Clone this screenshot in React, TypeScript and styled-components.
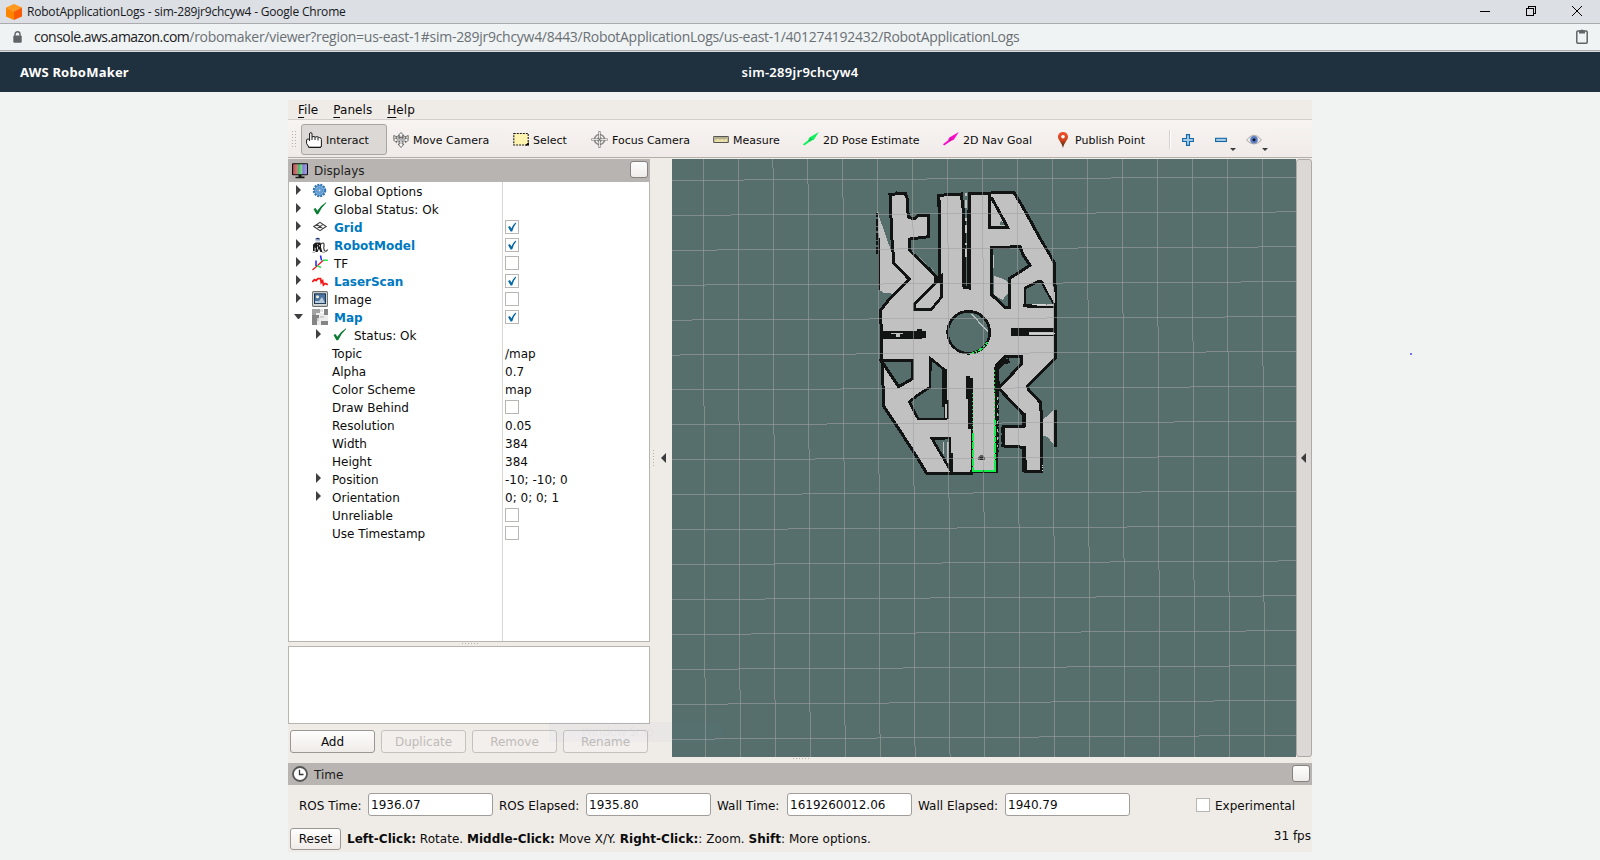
import React from 'react';
import styled, { createGlobalStyle } from 'styled-components';

const Global = createGlobalStyle`
  *, *::before, *::after { box-sizing: border-box; }
  html, body { margin: 0; padding: 0; }
  body {
    width: 1600px; height: 860px; overflow: hidden;
    background: #f1f3f3; color: #0c0c0c;
    font-family: "DejaVu Sans", sans-serif; font-size: 12px;
  }
`;

const Page = styled.div`
  position: relative; width: 1600px; height: 860px;
  display: flex; flex-direction: column; align-items: center;
`;

/* ---------- browser chrome ---------- */
const TitleBar = styled.div`
  width: 100%; height: 24px; flex: none; display: flex; align-items: center;
  background: #dcdfe4; border-bottom: 1px solid #a9abad; padding-left: 6px;
  font-family: "Open Sans", sans-serif; color: #16181b;
`;
const TitleText = styled.span`
  flex: 1; margin-left: 5px; font-size: 12px; line-height: 22px; letter-spacing: -0.2px; white-space: nowrap;
`;
const WindowButtons = styled.div`
  display: flex; width: 138px; height: 22px; align-items: center;
  svg { margin: 0 18px 2px 18px; flex: none; }
`;
const AddressBar = styled.div`
  width: 100%; height: 28px; flex: none; display: flex; align-items: center;
  background: #eff3f4; border-bottom: 1px solid #d5dadd; box-shadow: inset 0 -1px 0 #a9abad;
  padding: 0 12px 2px 13px;
`;
const Url = styled.div`
  flex: 1; margin-left: 12px; font-family: "Open Sans", sans-serif; font-size: 14px; line-height: 24px;
  letter-spacing: -0.285px; color: #6b7074; white-space: nowrap;
  b { font-weight: 400; letter-spacing: -0.52px; color: #1d2124; }
`;
const AwsHeader = styled.header`
  width: 100%; height: 40px; flex: none; display: grid; grid-template-columns: 1fr 1fr 1fr; align-items: center;
  background: #1f303e; color: #fff; padding: 0 20px; margin-bottom: 8px;
  font: 700 13px/40px "Noto Sans", sans-serif; letter-spacing: 0.2px; white-space: nowrap;
`;
const SimName = styled.span`
  text-align: center; font-weight: 600; letter-spacing: 0.28px;
`;

/* ---------- application window ---------- */
const Rviz = styled.div`
  width: 1024px; height: 752px; flex: none; background: #efebe7; display: flex; flex-direction: column;
`;
const MenuBar = styled.div`
  height: 20px; flex: none; display: flex; gap: 15px; padding-left: 10px; border-bottom: 1px solid #d3cfcc;
  line-height: 20px;
`;
const MenuItem = styled.span`
  display: block; letter-spacing: 0.05px;
  &::first-letter { text-decoration: underline; text-underline-offset: 3px; }
`;
const ToolBar = styled.div`
  height: 38px; flex: none; display: flex; align-items: center; padding: 2px 0 0 4px; margin-bottom: 1px;
  background: linear-gradient(#f8f4f1, #f0ebe8); border-bottom: 1px solid #b3aeaa; font-size: 11px;
`;
const Grip = styled.div<{ $w: number; $h: number; $after?: number }>`
  width: ${p => p.$w}px; height: ${p => p.$h}px; flex: none; margin-right: ${p => p.$after ?? 0}px;
  background-image: radial-gradient(circle at 0.5px 0.5px, #b5b1ae 0.6px, transparent 0.8px);
  background-size: 3px 3px;
`;
const Tool = styled.div<{ $w: number; $active?: boolean }>`
  width: ${p => p.$w}px; height: 31px; flex: none; display: flex; align-items: center; gap: 4px; padding-left: 4px;
  white-space: nowrap; border: 1px solid ${p => (p.$active ? '#a9a5a2' : 'transparent')};
  border-radius: 3px; background: ${p => (p.$active ? '#dcd8d5' : 'transparent')};
  margin-right: ${p => (p.$active ? 1 : 0)}px;
  svg { flex: none; }
  span { padding-top: 1px; }
`;
const ToolSeparator = styled.div`
  width: 1px; height: 19px; background: #d5d1ce; box-shadow: 1px 0 0 #fff; margin-right: 11px;
`;
const IconTool = styled.div`
  position: relative; width: 33px; height: 31px; display: flex; align-items: center; padding-left: 1px;
  &:last-child { padding-left: 0; margin-left: -1px; }
`;
const DropArrow = styled.i`
  position: absolute; left: 16px; top: 24px;
  border: 3px solid transparent; border-top-color: #3c3c3c; border-bottom: 0;
`;

const Middle = styled.div`
  height: 598px; flex: none; display: flex;
`;
const DisplaysDock = styled.section`
  width: 362px; flex: none; display: flex; flex-direction: column;
`;
const DockHeader = styled.div<{ $h: number }>`
  height: ${p => p.$h}px; flex: none; display: flex; align-items: center; padding: 0 2px 0 4px; background: #b8b4b1;
  span { flex: 1; margin-left: 6px; padding-top: 1px; color: #1c1c1c; }
`;
const FloatButton = styled.div`
  width: 18px; height: 17px; margin-bottom: 2px; border: 1px solid #858280; border-radius: 3px;
  background: linear-gradient(#fdfdfd, #efecea);
`;
const Tree = styled.div`
  height: 460px; flex: none; border: 1px solid #b8b4b0; border-top: 0;
  background: linear-gradient(90deg, #fff 213px, #d8d5d3 213px, #d8d5d3 214px, #fff 214px);
`;
const TreeRow = styled.div`
  display: grid; grid-template-columns: 216px 1fr; height: 18px; align-items: center; line-height: 16px;
`;
const NameCell = styled.div<{ $depth: number }>`
  display: flex; align-items: center; white-space: nowrap; padding-left: ${p => 7 + p.$depth * 20}px;
  > svg { flex: none; margin-right: 4px; }
`;
const Expander = styled.i<{ $state?: 'open' | 'closed' }>`
  width: ${p => (p.$state === 'open' ? 9 : 5)}px; flex: none;
  margin: 0 ${p => (p.$state === 'open' ? 9 : 11)}px 2px ${p => (p.$state === 'open' ? -2 : 0)}px;
  ${p => (p.$state === 'closed' ? 'border: 5px solid transparent; border-left-color: #404040; border-right: 0;' : '')}
  ${p => (p.$state === 'open' ? 'border: 4.5px solid transparent; border-top: 5px solid #404040; border-bottom: 0;' : '')}
`;
const Label = styled.span<{ $on?: boolean; $gap: number }>`
  display: block; margin-left: ${p => p.$gap}px; padding-top: 2px;
  ${p => (p.$on ? 'font-weight: 700; color: #0079c1;' : '')}
`;
const CheckBox = styled.div`
  width: 14px; height: 14px; border: 1px solid #b9b5b2; background: #fff; flex: none;
  svg { display: block; margin: -1px; }
`;
const SplitGrip = styled.div<{ $left: number; $h: number }>`
  height: ${p => p.$h}px; padding: 1px 0 0 ${p => p.$left}px; flex: none;
`;
const Description = styled.div`
  height: 78px; flex: none; border: 1px solid #b8b4b0; background: #fff;
`;
const ButtonRow = styled.div`
  display: flex; gap: 6px; padding: 6px 2px 0;
`;
const PushButton = styled.button<{ $w: number; $h: number }>`
  width: ${p => p.$w}px; height: ${p => p.$h}px; padding: 0; flex: none; border: 1px solid #9b9793; border-radius: 3px;
  background: linear-gradient(#fefefe, #efebe8); font: 12px "DejaVu Sans", sans-serif; color: #0c0c0c;
  &:disabled { color: #bfbbb8; border-color: #c5c1be; background: #f3efec; }
`;
const Splitter = styled.div`
  width: 22px; flex: none; display: flex; align-items: center; gap: 6px; padding-left: 3px;
`;
const LeftArrow = styled.i`
  border: 5px solid transparent; border-right-color: #3c3c3c; border-left: 0; margin-top: -1px;
`;
const Viewport = styled.div`
  width: 624px; height: 598px; flex: none; background: #566f6c;
  svg { display: block; }
`;
const RightHandle = styled.div`
  width: 16px; flex: none; display: flex; align-items: center; padding-left: 4px;
  border: 1px solid #aeaaa7; border-radius: 3px; background: #dcd8d6;
`;

const FieldRow = styled.div`
  height: 41px; flex: none; display: flex; align-items: center; padding: 0 0 2px 11px; white-space: nowrap;
`;
const FieldLabel = styled.label<{ $w: number }>`
  width: ${p => p.$w}px; flex: none; padding-top: 3px;
`;
const Field = styled.div`
  width: 125px; height: 23px; flex: none; margin-right: 6px; padding-left: 2px; line-height: 22px;
  border: 1px solid #a19d9a; border-radius: 3px; background: #fff;
`;
const Experimental = styled.div`
  display: flex; align-items: center; gap: 5px; margin-left: 60px;
  span { padding-top: 3px; }
`;
const StatusRow = styled.div`
  display: flex; align-items: center; padding: 2px 1px 0 2px; height: 24px; white-space: nowrap;
  p { flex: 1; margin: 0 0 0 6px; letter-spacing: 0.03px; }
`;
const Fps = styled.span`
  margin-top: -6px;
`;
const SnipGhost = styled.div`
  position: absolute; left: 549px; top: 722px; width: 173px; height: 20px; padding-left: 32px;
  background: rgba(110, 150, 220, 0.04); color: rgba(90, 90, 90, 0.06); line-height: 20px;
  font-family: "Open Sans", sans-serif;
`;
const PenDot = styled.div`
  position: absolute; left: 1410px; top: 353px; width: 2px; height: 2px; border-radius: 1px; background: #4646f0;
`;

/* ---------- icons ---------- */
const Svg = ({ children, w = 16, h = 16, ...rest }: any) => (
  <svg width={w} height={h} viewBox={`0 0 ${w} ${h}`} fill="none" {...rest}>{children}</svg>
);
const Cube = () => (
  <Svg>
    <path d="M8 0 L16 3.5 L8 7.5 L0 3.5Z" fill="#ff9a1f" />
    <path d="M0 3.5 L8 7.5 V16 L0 12.5Z" fill="#ff8400" />
    <path d="M16 3.5 L8 7.5 V16 L16 12.5Z" fill="#f95a05" />
  </Svg>
);
const Lock = () => (
  <Svg w={9} h={12}>
    <path d="M2 5 V3.3 A2.5 2.5 0 0 1 7 3.3 V5" stroke="#606467" strokeWidth="1.4" />
    <rect x="0.3" y="4.5" width="8.4" height="7.3" rx="1" fill="#606467" />
  </Svg>
);
const Clipboard = () => (
  <Svg w={12} h={15}>
    <rect x="0.8" y="2" width="10.4" height="12.2" rx="1" stroke="#606467" strokeWidth="1.5" />
    <path d="M3 1.5 H4.6 A1.5 1.5 0 0 1 7.4 1.5 H9 V4.5 H3Z" fill="#606467" />
  </Svg>
);
const Hand = () => (
  <Svg>
    <path d="M3.6 9 V2 Q3.6 .6 4.8 .6 T6 2 V5 Q7 4.2 8.2 4.6 T9.8 5 Q11 4.4 12 5 T13.5 5.6 Q15.4 5.6 15.4 7.5 V14 Q15.4 15.4 14 15.4 H3.6 Q2.4 15.4 2.2 14 L.6 11.5 V8 Q.8 6.8 2.2 7 L3.6 8" fill="#fff" stroke="#161616" strokeWidth="1" />
    <path d="M6 5 V8 M9 5 V8 M12 5.5 V8.4 M2.5 15.3 H15" stroke="#161616" strokeWidth="1" />
  </Svg>
);
const Move = () => (
  <Svg>
    <g stroke="#4c4c4c" strokeWidth=".8" fill="#f5f5f5">
      <path d="M8 .5 L11 3.7 H9.2 V7 H12.5 V5.3 L15.6 8 L12.5 10.6 V9 H9.2 V12 H11 L8 15.5 L5 12 H6.8 V9 H3.5 V10.6 L.4 8 L3.5 5.3 V7 H6.8 V3.7 H5Z" />
      <path d="M.8 3.5 L3 4.5 L8 5.5 L13 4.5 L15.2 3.5 V7 M.8 3.5 V7" fill="none" />
    </g>
    <path d="M5 4.7 L11 10.6 M11 4.7 L5 10.6" stroke="#777" strokeWidth=".7" />
  </Svg>
);
const Select = () => (
  <Svg>
    <rect x=".8" y="1.5" width="14.4" height="11.5" fill="#fff3b0" stroke="#1d1d1d" strokeWidth="1.1" strokeDasharray="2 1" />
    <path d="M15.8 10 V13.6 H12Z" fill="#000" />
  </Svg>
);
const Focus = () => (
  <Svg w={17} h={17}>
    <circle cx="8.5" cy="8.5" r="5" stroke="#8a8a8a" strokeWidth="1.6" />
    <circle cx="8.5" cy="8.5" r="2.2" stroke="#8a8a8a" strokeWidth="1" />
    <path d="M8.5 .3 V16.7 M.3 8.5 H16.7" stroke="#777" strokeWidth="2.2" />
    <path d="M8.5 1 V16 M1 8.5 H16" stroke="#f2f0ee" strokeWidth=".9" />
    <circle cx="8.5" cy="8.5" r="1" fill="#666" />
  </Svg>
);
const Ruler = () => (
  <Svg>
    <rect x=".7" y="4.5" width="14.6" height="6" rx=".5" fill="#e9dfa8" stroke="#555" strokeWidth="1.1" />
    <path d="M3 5 V7.5 M5 5 V7 M7 5 V7.5 M9 5 V7 M11 5 V7.5 M13 5 V7" stroke="#666" strokeWidth=".8" />
  </Svg>
);
const PoseArrow = ({ c }: { c: string }) => (
  <Svg>
    <path d="M0 12.3 L5.4 8 L6 5.8 L15.8 0 L10.8 7.8 L7.8 9 L1.2 13.6 Z" fill={c} />
    <path d="M5.4 8 L7.8 9 M7 6 L9 8" stroke="#333" strokeOpacity=".45" strokeWidth=".9" />
  </Svg>
);
const Pin = () => (
  <Svg>
    <defs><linearGradient id="pin" x1="0" y1="0" x2="0" y2="1"><stop offset="0" stopColor="#f4502c" /><stop offset=".5" stopColor="#d0421d" /><stop offset="1" stopColor="#2c2a10" /></linearGradient></defs>
    <path d="M8 0 C4.8 0 3 2.2 3 4.8 C3 8.2 6.8 10.5 8 16 C9.2 10.5 13 8.2 13 4.8 C13 2.2 11.2 0 8 0Z" fill="url(#pin)" />
    <circle cx="8" cy="4.8" r="1.8" fill="#fff" />
  </Svg>
);
const Plus = () => (
  <Svg w={12} h={12}><path d="M4.5 .6 H7.5 V4.5 H11.4 V7.5 H7.5 V11.4 H4.5 V7.5 H.6 V4.5 H4.5Z" fill="#a5cbe6" stroke="#1568a6" strokeWidth="1.1" /></Svg>
);
const Minus = () => (
  <Svg w={12} h={12}><rect x=".6" y="4.3" width="10.8" height="3.2" fill="#a5cbe6" stroke="#1568a6" strokeWidth="1.1" /></Svg>
);
const Eye = () => (
  <Svg w={16} h={12}>
    <path d="M.5 6 Q8 -3.5 15.5 6 Q8 14 .5 6Z" fill="#efedec" stroke="#a9a6a6" strokeWidth="1" />
    <circle cx="8" cy="5.8" r="3.8" fill="#5c7dc0" /><circle cx="8" cy="5.8" r="1.5" fill="#0d1330" />
  </Svg>
);
const Monitor = () => (
  <Svg>
    <defs><linearGradient id="rgb"><stop offset="0" stopColor="#b04a4f" /><stop offset=".33" stopColor="#d98080" /><stop offset=".34" stopColor="#3fae60" /><stop offset=".66" stopColor="#90d8a0" /><stop offset=".67" stopColor="#7d78d0" /><stop offset="1" stopColor="#a9a9f0" /></linearGradient></defs>
    <rect x=".5" y=".7" width="15" height="11" rx=".5" fill="url(#rgb)" stroke="#0c0c0c" strokeWidth="1.1" />
    <path d="M6.5 12 H9.5 V13.4 H12.5 V15.3 H3.5 V13.8 H6.5Z" fill="#151515" />
  </Svg>
);
const Gear = () => (
  <Svg>
    <circle cx="7.5" cy="7.5" r="5.7" stroke="#2f72b3" strokeWidth="2" strokeDasharray="2 1" />
    <circle cx="7.5" cy="7.5" r="4.9" fill="#7fb3de" stroke="#2f72b3" strokeWidth=".9" />
    <circle cx="7.5" cy="7.5" r="2.8" stroke="#2f72b3" strokeWidth=".9" strokeDasharray="1.5 .7" /><circle cx="7.5" cy="7.5" r="1.3" fill="#dcecf8" stroke="#2f72b3" strokeWidth=".6" />
  </Svg>
);
const Check = () => (
  <Svg><path d="M1.5 8 L3.6 7 L5.3 9.8 Q8.5 4.5 14 1.2 L14.2 1.9 Q9 6.5 6.2 13.2 L4.4 13.2Z" fill="#0c7c35" /></Svg>
);
const GridIcon = () => (
  <Svg><path d="M1.8 7.5 L8 3.4 L14.2 7.5 L8 11.6Z M4.9 5.4 L11 9.6 M11 5.4 L4.9 9.6" stroke="#3f3f3f" strokeWidth="1.1" /></Svg>
);
const Robot = () => (
  <Svg>
    <path d="M3.5 1.8 Q5.5 -.2 8 1.8 V2.6 H3.5Z" fill="#1c3575" /><path d="M3.5 3.3 H8 V4.3 H3.5Z" fill="#9aa6c4" />
    <path d="M3.6 5.4 H8.4 L9 7 V10.5 L10.4 15 H8.4 L7 11.8 L5.6 15 H3.4 L3.6 11 L2.6 10.5 L2.8 14 H1 V7.5 Z" fill="#1b1b1b" />
    <path d="M9 7 Q12.6 4.4 12 9 Q11.4 11.5 12.4 13.4 Q14 15.4 15.6 12.6" stroke="#333" strokeWidth="1.1" />
    <path d="M5 7.4 H5.8 M7.4 8 V9.5 M5.5 9.5 V12.4" stroke="#eee" strokeWidth=".9" />
    <path d="M.5 15.3 H3 M10 15.3 H13" stroke="#999" strokeWidth=".9" />
  </Svg>
);
const Tf = () => (
  <Svg>
    <path d="M.5 15 L5 11 L11 5.5" stroke="#f01a1a" strokeWidth="1.3" /><path d="M4 11 V5.5 M9.5 5.4 L8.5 .5" stroke="#2222e8" strokeWidth="1.5" />
    <path d="M5 10.7 L9 12.5 M11 5.3 H15.8" stroke="#1fe04a" strokeWidth="1.4" />
  </Svg>
);
const Laser = () => (
  <Svg><path d="M.3 9 L2.5 6.6 L4 7.6 L6 5.6 L8.6 5.6 L9.2 9.6 L10.6 7.8 L11.4 12 L13 10.4 L15.8 11.6" stroke="#f51414" strokeWidth="1.7" /></Svg>
);
const ImageIcon = () => (
  <Svg>
    <rect x=".6" y=".6" width="14.8" height="14.8" rx="1" fill="#e9ebe8" stroke="#6b6f6c" strokeWidth="1.1" />
    <rect x="2.5" y="2.8" width="11" height="9.8" fill="#4a74a2" stroke="#1f3650" />
    <path d="M3 10 L7 10 L10 6 L13 12 H3Z" fill="#b8cbd8" /><circle cx="5.5" cy="5.8" r="1.5" fill="#f6f3d6" />
  </Svg>
);
const MapIcon = () => (
  <Svg shapeRendering="crispEdges">
    <path d="M0 0 H8 V4 H4 V8 H0Z" fill="#a2a2a2" />
    <rect x="8" y="0" width="3" height="3" fill="#e4e4e4" /><rect x="4" y="4" width="12" height="12" fill="#ececec" />
    <path d="M12 0 H16 V6 H12Z M0 6 H5 V16 H0Z M9 12 H16 V16 H9Z M5 6 H7 V9 H5Z" fill="#858585" />
    <path d="M8 7 H12 V9 H8Z M5 9 H7 V12 H5Z" fill="#cfcfcf" />
  </Svg>
);
const Clock = () => (
  <Svg><circle cx="8" cy="8" r="7" fill="#fff" stroke="#555" strokeWidth="1.8" /><path d="M7.5 3.8 V8.5 H11.5" stroke="#333" strokeWidth="1.3" /></Svg>
);
const Tick = () => (
  <Svg w={14} h={14}><path d="M3 7 L5 6 L6.3 8.5 Q7.7 5 10.6 2.6 L11.2 3.2 Q8.5 6.5 7.2 11.4 L5.6 11.4Z" fill="#0868a8" /></Svg>
);

/* ---------- map view ---------- */
const BLACK = '#111413';
const FREE = '#c1c1c1';
const VOID = '#566f6c';
const GREEN = '#10f048';

const SlamMap = () => (
  <svg width="624" height="598" viewBox="0 0 624 598" shapeRendering="crispEdges">
    <rect width="624" height="598" fill={VOID} />
    <g transform="translate(198 21) scale(.333333)" stroke={BLACK} strokeWidth="9" fill={VOID}>
      <path d="M22 96 L38 140 L64 215 L72 250 L118 298 L74 342 L40 338 L28 330 V200Z" fill={FREE} stroke="none" />
      <path d="M22 100 V226" strokeWidth="5" strokeDasharray="12 5 22 3" /><path d="M28 175 V330" strokeWidth="6" />
      <path d="M512 725 L552 690 V795 L532 770 L514 768Z" fill={FREE} stroke="none" />
      <path d="M557 690 V800" strokeWidth="7" />
      <path d="M60 44 L72 44 L80 39 L106 40 L111 54 L112 90 L117 113 L134 116 L146 106 L176 106 V170 L120 177 V212 L150 242 L180 270 L208 300 L210 180 L206 46 L274 42 L282 110 L284 322 L298 324 V40 L432 38 L455 75 L480 120 L510 175 L540 225 L553 250 L555 320 L558 390 L556 534 L472 618 L476 630 L512 668 L516 760 V875 H466 L464 802 L402 798 V740 H462 V705 L386 625 L380 600 V875 H306 V880 H170 L140 830 L95 760 L42 680 L36 550 L32 390 L60 355 L95 320 L118 298 L72 250 L66 180Z" fill={FREE} strokeWidth="9" />
      <path d="M370 540 H470 L480 640 L400 640Z" fill={FREE} stroke="none" />
      <path d="M556 534 L472 618 L476 630 L512 668" fill="none" />
      <path d="M380 556 L405 531 H456 V550 L386 625Z" strokeWidth="9" />
      <path d="M386 625 L462 705" strokeWidth="9" />
      <path d="M384 562 L396 548 L418 542" strokeWidth="14" fill="none" />
      <path d="M288 40 V240" stroke={FREE} strokeWidth="5" strokeDasharray="8 12 24 30" />
      <path d="M281 110 V320 M297 90 V320" strokeWidth="10" />
      <path d="M125 212 L205 285" stroke="#b4bcba" strokeWidth="2" strokeDasharray="12 17 30 20" />
      <path d="M198 308 L134 372 L132 388 H184 L214 352 V290 L198 308" fill={FREE} strokeWidth="8" />
      <path d="M192 290 H216 V310 H192Z" fill={BLACK} stroke="none" />
      <path d="M210 60 V300" strokeWidth="8" />
      <path d="M360 44 V142 H412 L400 118 L364 52" fill={FREE} strokeWidth="9" />
      <path d="M396 122 L404 136 H390 V126Z" stroke="none" />
      <path d="M364 203 L450 200 L458 222 L480 256 L418 296 V382 H405 L366 345Z" strokeWidth="9" />
      <path d="M372 288 L396 295 L413 305 V340 L397 360 L372 344Z" fill={FREE} stroke="none" />
      <path d="M370 225 V265" stroke={FREE} strokeWidth="4" />
      <path d="M465 378 V324 L505 304 H514 L552 372" strokeWidth="8" />
      <path d="M520 310 L554 335 V368 L550 365Z" fill={FREE} stroke="none" />
      <path d="M465 326 V378 M460 376 H500 M470 381 H555" strokeWidth="8" />
      <path d="M486 374 H528" stroke="#d8d8d8" strokeWidth="4" />
      <path d="M424 443 H552 V456 H476 V467 H424Z" fill={BLACK} stroke="none" />
      <path d="M476 467 H556" strokeWidth="4" /><path d="M476 460 H554" stroke="#d4d4d4" strokeWidth="4" />
      <path d="M30 453 H142 V447 H156 V453 H168 V473 H156 V478 H34Z" fill={BLACK} stroke="none" />
      <path d="M64 461 H98 M78 465 H90 M78 470 H90" stroke={FREE} strokeWidth="4" />
      <circle cx="296" cy="457" r="63" strokeWidth="8" />
      <path d="M305 402 L354 456" stroke="#b8c0be" strokeWidth="4" />
      <path d="M34 542 H128 V596 L86 620Z" />
      <path d="M181 535 L206 555 L226 572 V717 H145 L136 700 L118 665 L148 642 L180 622Z" strokeWidth="8" />
      <path d="M224 568 V680" strokeWidth="13" />
      <path d="M228 672 V714" stroke={FREE} strokeWidth="7" /><path d="M234 660 V718" strokeWidth="4" />
      <path d="M186 776 L240 868 V774Z" strokeWidth="8" />
      <path d="M233 785 V850" stroke={FREE} strokeWidth="6" />
      <path d="M222 786 V822" stroke={FREE} strokeWidth="3" />
      <path d="M288 588 H300 V594 H308 V870 H302 V748 H294 V656 H288Z" fill={BLACK} stroke="none" />
      <path d="M246 820 V876" strokeWidth="5" /><path d="M232 882 H280" strokeWidth="9" strokeDasharray="4 3" />
      <path d="M380 560 V640" strokeWidth="13" />
      <path d="M383 640 V815" strokeWidth="7" strokeDasharray="12 5" /><path d="M383 652 V800" stroke={FREE} strokeWidth="4" strokeDasharray="8 16" />
      <path d="M398 740 V800" strokeWidth="10" strokeDasharray="20 6" />
      <path d="M462 700 V740 M462 805 V875" strokeWidth="11" />
      <path d="M519 855 V875" stroke="#ddd" strokeWidth="3" strokeDasharray="3 4" />
      <path d="M559 315 V470" strokeWidth="6" strokeDasharray="50 6 18 4" />
      <g stroke={GREEN} fill="none">
        <path d="M309 640 V760" strokeWidth="3" strokeDasharray="3 9" />
        <path d="M309 760 V874" strokeWidth="6" strokeDasharray="22 3" />
        <path d="M306 873 H380" strokeWidth="7" strokeDasharray="34 3" />
        <path d="M374 570 V720" strokeWidth="4" strokeDasharray="5 7" />
        <path d="M376 720 V876" strokeWidth="6" strokeDasharray="14 4 30 3" />
        <path d="M298 521 Q332 518 352 486" strokeWidth="5" strokeDasharray="14 5 6 4" />
      </g>
      <path d="M323 839 V833 L330 825 H339 L345 833 V839 H339 V834 H330 V839Z" fill="#606060" stroke="none" />
      <path d="M330 830 H339 V839 H330Z" fill="#2a2a2a" stroke="none" />
    </g>
    <g stroke="#a0a0a4" strokeOpacity=".58" strokeWidth="1">
      {Array.from({ length: 17 }, (_, k) => (
        <line key={`v${k}`} x1={31.1 + k * 34.94} y1="0" x2={33.3 + k * 34.96} y2="598" />
      ))}
      {Array.from({ length: 17 }, (_, k) => (
        <line key={`h${k}`} x1="0" y1={21.4 + k * 34.93} x2="624" y2={18 + k * 34.9} />
      ))}
    </g>
  </svg>
);

/* ---------- data ---------- */
type Row = {
  name: string; depth?: number; arrow?: 'open' | 'closed'; icon?: React.ReactNode; on?: boolean;
  check?: boolean; value?: string;
};
const rows: Row[] = [
  { name: 'Global Options', arrow: 'closed', icon: <Gear /> },
  { name: 'Global Status: Ok', arrow: 'closed', icon: <Check /> },
  { name: 'Grid', arrow: 'closed', icon: <GridIcon />, on: true, check: true },
  { name: 'RobotModel', arrow: 'closed', icon: <Robot />, on: true, check: true },
  { name: 'TF', arrow: 'closed', icon: <Tf />, check: false },
  { name: 'LaserScan', arrow: 'closed', icon: <Laser />, on: true, check: true },
  { name: 'Image', arrow: 'closed', icon: <ImageIcon />, check: false },
  { name: 'Map', arrow: 'open', icon: <MapIcon />, on: true, check: true },
  { name: 'Status: Ok', depth: 1, arrow: 'closed', icon: <Check /> },
  { name: 'Topic', depth: 1, value: '/map' },
  { name: 'Alpha', depth: 1, value: '0.7' },
  { name: 'Color Scheme', depth: 1, value: 'map' },
  { name: 'Draw Behind', depth: 1, check: false },
  { name: 'Resolution', depth: 1, value: '0.05' },
  { name: 'Width', depth: 1, value: '384' },
  { name: 'Height', depth: 1, value: '384' },
  { name: 'Position', depth: 1, arrow: 'closed', value: '-10; -10; 0' },
  { name: 'Orientation', depth: 1, arrow: 'closed', value: '0; 0; 0; 1' },
  { name: 'Unreliable', depth: 1, check: false },
  { name: 'Use Timestamp', depth: 1, check: false },
];
const tools: { name: string; w: number; icon: React.ReactNode }[] = [
  { name: 'Interact', w: 86, icon: <Hand /> },
  { name: 'Move Camera', w: 120, icon: <Move /> },
  { name: 'Select', w: 78, icon: <Select /> },
  { name: 'Focus Camera', w: 122, icon: <Focus /> },
  { name: 'Measure', w: 90, icon: <Ruler /> },
  { name: '2D Pose Estimate', w: 140, icon: <PoseArrow c="#0cf25c" /> },
  { name: '2D Nav Goal', w: 112, icon: <PoseArrow c="#fb0cc8" /> },
  { name: 'Publish Point', w: 119, icon: <Pin /> },
];
const fields: [string, number, string][] = [
  ['ROS Time:', 69, '1936.07'],
  ['ROS Elapsed:', 87, '1935.80'],
  ['Wall Time:', 70, '1619260012.06'],
  ['Wall Elapsed:', 87, '1940.79'],
];

export default function App() {
  return (
    <Page>
      <Global />
      <TitleBar>
        <Cube />
        <TitleText>RobotApplicationLogs - sim-289jr9chcyw4 - Google Chrome</TitleText>
        <WindowButtons>
          <Svg w={10} h={10} shapeRendering="crispEdges"><path d="M0 5.5 H10" stroke="#000" /></Svg>
          <Svg w={10} h={10} shapeRendering="crispEdges"><path d="M.5 2.5 H7.5 V9.5 H.5Z M2.5 2.5 V.5 H9.5 V7.5 H7.5" stroke="#000" /></Svg>
          <Svg w={10} h={10}><path d="M0 0 L10 10 M10 0 L0 10" stroke="#000" /></Svg>
        </WindowButtons>
      </TitleBar>
      <AddressBar>
        <Lock />
        <Url><b>console.aws.amazon.com</b>/robomaker/viewer?region=us-east-1#sim-289jr9chcyw4/8443/RobotApplicationLogs/us-east-1/401274192432/RobotApplicationLogs</Url>
        <Clipboard />
      </AddressBar>
      <AwsHeader>
        <span>AWS RoboMaker</span>
        <SimName>sim-289jr9chcyw4</SimName>
      </AwsHeader>

      <Rviz>
        <MenuBar>
          <MenuItem>File</MenuItem>
          <MenuItem>Panels</MenuItem>
          <MenuItem>Help</MenuItem>
        </MenuBar>
        <ToolBar>
          <Grip $w={6} $h={17} $after={3} />
          {tools.map((t, i) => (
            <Tool key={t.name} $w={t.w} $active={i === 0}>{t.icon}<span>{t.name}</span></Tool>
          ))}
          <ToolSeparator />
          <IconTool><Plus /></IconTool>
          <IconTool><Minus /><DropArrow /></IconTool>
          <IconTool><Eye /><DropArrow /></IconTool>
        </ToolBar>

        <Middle>
          <DisplaysDock>
            <DockHeader $h={23}><Monitor /><span>Displays</span><FloatButton /></DockHeader>
            <Tree>
              {rows.map(r => {
                const depth = r.depth ?? 0;
                return (
                  <TreeRow key={r.name}>
                    <NameCell $depth={depth}>
                      <Expander $state={r.arrow} />
                      {r.icon}
                      <Label $on={r.on} $gap={r.icon ? 2 : 0}>{r.name}</Label>
                    </NameCell>
                    {r.check !== undefined ? <CheckBox>{r.check && <Tick />}</CheckBox> : <Label $gap={0}>{r.value}</Label>}
                  </TreeRow>
                );
              })}
            </Tree>
            <SplitGrip $left={174} $h={4}><Grip $w={18} $h={2} /></SplitGrip>
            <Description />
            <ButtonRow>
              <PushButton $w={85} $h={23}>Add</PushButton>
              <PushButton $w={85} $h={23} disabled>Duplicate</PushButton>
              <PushButton $w={85} $h={23} disabled>Remove</PushButton>
              <PushButton $w={85} $h={23} disabled>Rename</PushButton>
            </ButtonRow>
          </DisplaysDock>
          <Splitter><Grip $w={2} $h={17} /><LeftArrow /></Splitter>
          <Viewport><SlamMap /></Viewport>
          <RightHandle><LeftArrow /></RightHandle>
        </Middle>

        <SplitGrip $left={505} $h={6}><Grip $w={18} $h={3} /></SplitGrip>
        <DockHeader $h={22}><Clock /><span>Time</span><FloatButton /></DockHeader>
        <FieldRow>
          {fields.map(([label, w, value]) => (
            <React.Fragment key={label}>
              <FieldLabel $w={w}>{label}</FieldLabel>
              <Field>{value}</Field>
            </React.Fragment>
          ))}
          <Experimental><CheckBox /><span>Experimental</span></Experimental>
        </FieldRow>
        <StatusRow>
          <PushButton $w={51} $h={22}>Reset</PushButton>
          <p><b>Left-Click:</b> Rotate. <b>Middle-Click:</b> Move X/Y. <b>Right-Click:</b>: Zoom. <b>Shift</b>: More options.</p>
          <Fps>31 fps</Fps>
        </StatusRow>
      </Rviz>
      <SnipGhost>Window Snip</SnipGhost>
      <PenDot />
    </Page>
  );
}
